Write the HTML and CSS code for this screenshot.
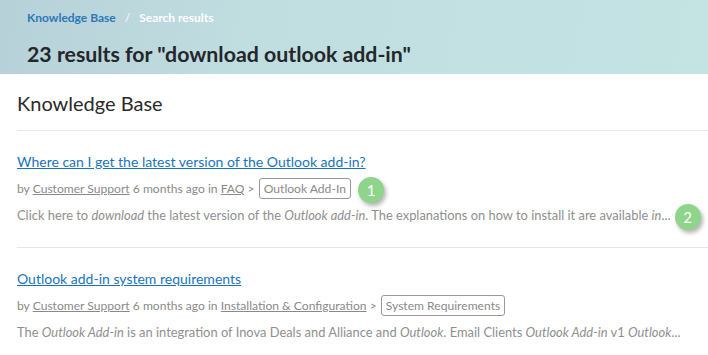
FILE: index.html
```html
<!DOCTYPE html>
<html lang="en">
<head>
  <meta charset="UTF-8">
  <meta name="viewport" content="width=device-width, initial-scale=1.0">
  <title>Search results</title>
  <link rel="stylesheet" href="styles.css">
</head>
<body>
  <header class="hero">
    <nav class="crumbs">
      <a href="#">Knowledge Base</a>
      <span class="sep">/</span>
      <span class="current">Search results</span>
    </nav>
    <h1>23 results for "download outlook add-in"</h1>
  </header>

  <main class="results">
    <h2>Knowledge Base</h2>
    <ul class="list">
      <li class="item">
        <a class="title" href="#">Where can I get the latest version of the Outlook add-in?</a>
        <div class="meta">
          by <a href="#">Customer Support</a> 6 months ago in <a href="#">FAQ</a> &gt;
          <span class="tag">Outlook Add-In</span>
          <span class="badge">1</span>
        </div>
        <p class="desc">Click here to <em>download</em> the latest version of the <em>Outlook add-in</em>. The explanations on how to install it are available <em>in</em>...<span class="badge">2</span></p>
      </li>
      <li class="item">
        <a class="title" href="#">Outlook add-in system requirements</a>
        <div class="meta">
          by <a href="#">Customer Support</a> 6 months ago in <a href="#">Installation &amp; Configuration</a> &gt;
          <span class="tag">System Requirements</span>
        </div>
        <p class="desc">The <em>Outlook Add-in</em> is an integration of Inova Deals and Alliance and <em>Outlook</em>. Email Clients <em>Outlook Add-in</em> v1 <em>Outlook</em>...</p>
      </li>
    </ul>
  </main>
</body>
</html>
```

FILE: styles.css
```css
body {
  margin: 0;
  font-family: Lato, "Open Sans", sans-serif;
  background-color: #fff;
  color: #333;
  overflow: hidden;
}
.hero {
  height: 74px;
  padding: 10px 27px 0;
  box-sizing: border-box;
  background: linear-gradient(100deg, #b7d1d8 0%, #c0dde0 35%, #c4e4e4 100%);
}
.crumbs {
  font-size: 12px;
  font-weight: bold;
  line-height: 16px;
}
.crumbs a {
  color: #2b78b5;
  text-decoration: none;
}
.crumbs .sep {
  color: #e8f2f4;
  margin: 0 6px;
}
.crumbs .current {
  color: #fff;
}
.hero h1 {
  margin: 14px 0 0;
  font-size: 21.3px;
  line-height: 28px;
  font-weight: bold;
  color: #23262a;
}
.results {
  padding-left: 17px;
}
.results h2 {
  margin: 0;
  padding: 16px 0 14px;
  font-size: 20px;
  line-height: 26px;
  font-weight: normal;
  color: #2a2a2a;
  border-bottom: 1px solid #e6e6e6;
}
.list {
  list-style: none;
  margin: 0;
  padding: 0;
}
.item {
  padding: 17px 0 18px;
  border-bottom: 1px solid #e6e6e6;
  line-height: 27px;
}
.title {
  display: block;
  font-size: 14px;
  color: #1a74bb;
}
.meta {
  font-size: 12.1px;
  color: #8a8a8a;
}
.meta a {
  color: #8a8a8a;
}
.desc {
  margin: 0;
  font-size: 12.9px;
  color: #8f8f8f;
  white-space: nowrap;
}
.tag {
  display: inline-block;
  border: 1px solid #999;
  border-radius: 3px;
  padding: 0 4px;
  line-height: 19px;
  margin-left: 1px;
}
.badge {
  display: inline-block;
  width: 26px;
  height: 26px;
  line-height: 26px;
  margin: -4px 0 -4px 4px;
  border-radius: 50%;
  background-color: #8fd48b;
  color: #fff;
  text-align: center;
  font-size: 15px;
  font-style: normal;
  vertical-align: middle;
  box-shadow: 2px 3px 4px rgba(0, 0, 0, 0.3);
}
```
